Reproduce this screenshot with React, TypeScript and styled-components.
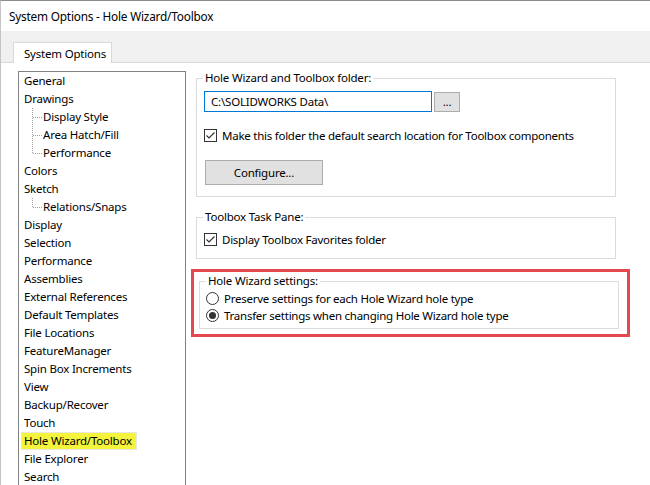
import styled, { createGlobalStyle } from "styled-components";

const GlobalStyle = createGlobalStyle`
  html, body {
    margin: 0;
    padding: 0;
    background: #fff;
  }
  body {
    font-family: "Noto Sans", "Open Sans", sans-serif;
    font-size: 11.5px;
    letter-spacing: -0.2px;
    color: #000;
  }
`;

const Window = styled.div`
  width: 650px;
  height: 485px;
  overflow: hidden;
  box-sizing: border-box;
  border-top: 1px solid #8c8c8c;
  border-left: 1px solid #c4c4c4;
  background: #fff;
  display: flex;
  flex-direction: column;
`;

const TitleBar = styled.div`
  height: 30px;
  flex: none;
  display: flex;
  align-items: center;
  padding-left: 8px;
  font-size: 11.8px;
  background: #fff;
`;

const TabStrip = styled.div`
  height: 32px;
  flex: none;
  box-sizing: border-box;
  background: #f0f0f0;
  border-bottom: 1px solid #d9d9d9;
  display: flex;
  align-items: flex-end;
  padding-left: 12px;
`;

const Tab = styled.div`
  height: 21px;
  box-sizing: border-box;
  margin-bottom: -1px;
  padding: 0 5px 0 10px;
  display: flex;
  align-items: center;
  background: #fff;
  border: 1px solid #d9d9d9;
  border-bottom: none;
`;

const Body = styled.div`
  flex: 1;
  display: flex;
  align-items: flex-start;
  padding-left: 17px;
  min-height: 0;
`;

const Tree = styled.div`
  width: 168px;
  height: 440px;
  flex: none;
  box-sizing: border-box;
  margin-top: 8px;
  border: 1px solid #828282;
  padding: 0 5px;
  overflow: hidden;
`;

const TreeRow = styled.div`
  height: 18px;
  display: flex;
  align-items: center;
  white-space: nowrap;
`;

const RowLabel = styled.span<{ $selected?: boolean }>`
  line-height: 16px;
  padding: ${(p) => (p.$selected ? "0 4px 0 2px" : "0 2px")};
  margin-left: -2px;
  background: ${(p) => (p.$selected ? "#f4f43c" : "transparent")};
  box-shadow: ${(p) => (p.$selected ? "0 0 0 1px #e8e8e0" : "none")};
`;

const Right = styled.div`
  width: 439px;
  margin-left: 5px;
  margin-top: 7px;
  display: flex;
  flex-direction: column;
`;

const Group = styled.fieldset<{ $gap?: number }>`
  margin: ${(p) => p.$gap ?? 0}px 0 0 5px;
  width: 420px;
  box-sizing: border-box;
  border: 1px solid #dcdcdc;
  padding: 0 7px;
  min-width: 0;
`;

const Legend = styled.legend`
  margin-left: -1px;
  padding: 0 2px;
  line-height: 16px;
`;

const FolderRow = styled.div`
  display: flex;
  align-items: center;
  gap: 2px;
  margin-top: 5px;
`;

const PathInput = styled.div`
  width: 228px;
  height: 21px;
  box-sizing: border-box;
  border: 1px solid #0078d7;
  padding-left: 6px;
  display: flex;
  align-items: center;
`;

const Button = styled.div<{ $w: number; $h: number }>`
  width: ${(p) => p.$w}px;
  height: ${(p) => p.$h}px;
  box-sizing: border-box;
  background: #e1e1e1;
  border: 1px solid #adadad;
  display: flex;
  align-items: center;
  justify-content: center;
`;

const OptionRow = styled.div<{ $top?: number; $h?: number }>`
  height: ${(p) => p.$h ?? 18}px;
  margin-top: ${(p) => p.$top ?? 0}px;
  display: flex;
  align-items: center;
  gap: 5px;
  white-space: nowrap;
  letter-spacing: -0.25px;
`;

const CheckBox = styled.span`
  width: 13px;
  height: 13px;
  box-sizing: border-box;
  border: 1px solid #333;
  background: #fff;
  flex: none;
  display: flex;
`;

const Radio = styled.span<{ $on?: boolean }>`
  width: 13px;
  height: 13px;
  box-sizing: border-box;
  border: 1px solid #333;
  border-radius: 50%;
  background: #fff;
  flex: none;
  display: flex;
  align-items: center;
  justify-content: center;
  margin-left: -1px;

  &::after {
    content: "";
    width: 7px;
    height: 7px;
    border-radius: 50%;
    background: ${(p) => (p.$on ? "#333" : "transparent")};
  }
`;

const ConfigureWrap = styled.div`
  margin: 16px 0 11px 1px;
`;

const Highlight = styled.div`
  margin-top: 10px;
  width: 439px;
  box-sizing: border-box;
  border: 3px solid #e5484d;
  padding: 1px 11px 5px 0;
`;

const Spacer = styled.div<{ $h: number }>`
  height: ${(p) => p.$h}px;
`;

function Check() {
  return (
    <CheckBox>
      <svg width="11" height="11" viewBox="0 0 11 11">
        <path d="M1.5 5.5 L4 8 L9.5 2.5" fill="none" stroke="#333" strokeWidth="1.2" />
      </svg>
    </CheckBox>
  );
}

function Connector({ last }: { last?: boolean }) {
  return (
    <svg width="19" height="18" viewBox="0 0 19 18" style={{ flex: "none" }}>
      <line x1="8.5" y1="0" x2="8.5" y2={last ? 9 : 18} stroke="#a0a0a0" strokeDasharray="1 1" />
      <line x1="9" y1="9.5" x2="18" y2="9.5" stroke="#a0a0a0" strokeDasharray="1 1" />
    </svg>
  );
}

type Item = { label: string; child?: boolean; last?: boolean; selected?: boolean };

const items: Item[] = [
  { label: "General" },
  { label: "Drawings" },
  { label: "Display Style", child: true },
  { label: "Area Hatch/Fill", child: true },
  { label: "Performance", child: true, last: true },
  { label: "Colors" },
  { label: "Sketch" },
  { label: "Relations/Snaps", child: true, last: true },
  { label: "Display" },
  { label: "Selection" },
  { label: "Performance" },
  { label: "Assemblies" },
  { label: "External References" },
  { label: "Default Templates" },
  { label: "File Locations" },
  { label: "FeatureManager" },
  { label: "Spin Box Increments" },
  { label: "View" },
  { label: "Backup/Recover" },
  { label: "Touch" },
  { label: "Hole Wizard/Toolbox", selected: true },
  { label: "File Explorer" },
  { label: "Search" },
];

export default function App() {
  return (
    <>
      <GlobalStyle />
      <Window>
        <TitleBar>System Options - Hole Wizard/Toolbox</TitleBar>
        <TabStrip>
          <Tab>System Options</Tab>
        </TabStrip>
        <Body>
          <Tree>
            {items.map((it, i) => (
              <TreeRow key={i}>
                {it.child && <Connector last={it.last} />}
                <RowLabel $selected={it.selected}>{it.label}</RowLabel>
              </TreeRow>
            ))}
          </Tree>
          <Right>
            <Group>
              <Legend>Hole Wizard and Toolbox folder:</Legend>
              <FolderRow>
                <PathInput>C:\SOLIDWORKS Data\</PathInput>
                <Button $w={26} $h={20}>...</Button>
              </FolderRow>
              <OptionRow $top={14}>
                <Check />
                Make this folder the default search location for Toolbox components
              </OptionRow>
              <ConfigureWrap>
                <Button $w={118} $h={25}>Configure...</Button>
              </ConfigureWrap>
            </Group>
            <Group $gap={12}>
              <Legend>Toolbox Task Pane:</Legend>
              <OptionRow $top={5}>
                <Check />
                Display Toolbox Favorites folder
              </OptionRow>
              <Spacer $h={10} />
            </Group>
            <Highlight>
              <Group>
                <Legend>Hole Wizard settings:</Legend>
                <OptionRow $top={1} $h={17}>
                  <Radio />
                  Preserve settings for each Hole Wizard hole type
                </OptionRow>
                <OptionRow $h={17}>
                  <Radio $on />
                  Transfer settings when changing Hole Wizard hole type
                </OptionRow>
                <Spacer $h={4} />
              </Group>
            </Highlight>
          </Right>
        </Body>
      </Window>
    </>
  );
}
